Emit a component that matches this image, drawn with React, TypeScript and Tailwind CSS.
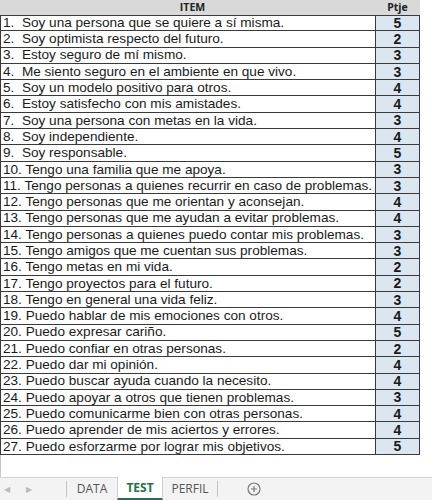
import { Fragment } from "react";

const items: [string, number][] = [
  ["1.  Soy una persona que se quiere a sí misma.", 5],
  ["2.  Soy optimista respecto del futuro.", 2],
  ["3.  Estoy seguro de mí mismo.", 3],
  ["4.  Me siento seguro en el ambiente en que vivo.", 3],
  ["5.  Soy un modelo positivo para otros.", 4],
  ["6.  Estoy satisfecho con mis amistades.", 4],
  ["7.  Soy una persona con metas en la vida.", 3],
  ["8.  Soy independiente.", 4],
  ["9.  Soy responsable.", 5],
  ["10. Tengo una familia que me apoya.", 3],
  ["11. Tengo personas a quienes recurrir en caso de problemas.", 3],
  ["12. Tengo personas que me orientan y aconsejan.", 4],
  ["13. Tengo personas que me ayudan a evitar problemas.", 4],
  ["14. Tengo personas a quienes puedo contar mis problemas.", 3],
  ["15. Tengo amigos que me cuentan sus problemas.", 3],
  ["16. Tengo metas en mi vida.", 2],
  ["17. Tengo proyectos para el futuro.", 2],
  ["18. Tengo en general una vida feliz.", 3],
  ["19. Puedo hablar de mis emociones con otros.", 4],
  ["20. Puedo expresar cariño.", 5],
  ["21. Puedo confiar en otras personas.", 2],
  ["22. Puedo dar mi opinión.", 4],
  ["23. Puedo buscar ayuda cuando la necesito.", 4],
  ["24. Puedo apoyar a otros que tienen problemas.", 3],
  ["25. Puedo comunicarme bien con otras personas.", 4],
  ["26. Puedo aprender de mis aciertos y errores.", 4],
  ["27. Puedo esforzarme por lograr mis objetivos.", 5],
];

export default function App() {
  return (
    <div className="w-[432px] h-[500px] bg-white flex flex-col overflow-hidden font-['Liberation_Sans',Arial,sans-serif] text-[#1a1a1a]">
      <div className="grid grid-cols-[375px_45px] w-[420px]">
        <div className="h-[15px] bg-[#d9d9d9] flex items-center justify-center text-[10.5px] font-bold font-['Open_Sans',sans-serif] text-[#222] pl-[10px]">
          ITEM
        </div>
        <div className="h-[15px] bg-[#d9d9d9] flex items-center justify-center text-[10.5px] font-bold font-['Open_Sans',sans-serif] text-[#222]">
          Ptje
        </div>
        {items.map(([text, score], i) => (
          <Fragment key={i}>
            <div
              className={`h-[16.3px] border-l border-b border-[#3a3a3a] pl-[2px] flex items-center text-[13.6px] leading-none whitespace-pre overflow-hidden ${i === 0 ? "border-t" : ""}`}
            >
              {text}
            </div>
            <div
              className={`h-[16.3px] border-x border-b border-[#3a3a3a] bg-[#dce6f1] flex items-center justify-center text-[14px] font-bold leading-none ${i === 0 ? "border-t" : ""}`}
            >
              {score}
            </div>
          </Fragment>
        ))}
      </div>
      <div className="flex-1 border-l border-[#c8c8c8]" />
      <div className="h-[23px] bg-[#f3f3f3] border-t border-[#d4d4d4] flex items-stretch text-[12px] font-['Open_Sans',sans-serif] text-[#555]">
        <div className="w-[66px] flex items-center text-[8px] text-[#bbb]">
          <span className="ml-[4px]">◀</span>
          <span className="ml-[16px]">▶</span>
        </div>
        <div className="w-px bg-[#c4c4c4] my-[3px]" />
        <div className="w-[50px] flex items-center justify-center">DATA</div>
        <div className="w-[46px] bg-white border-x border-[#d0d0d0] border-b-2 border-b-[#217346] -mt-px flex items-center justify-center font-bold text-[#217346]">
          TEST
        </div>
        <div className="w-[54px] flex items-center justify-center">PERFIL</div>
        <div className="w-px bg-[#c4c4c4] my-[3px]" />
        <div className="w-[72px] flex items-center justify-center">
          <svg width="14" height="14" viewBox="0 0 14 14" fill="none" stroke="#777" strokeWidth="1.2">
            <circle cx="7" cy="7" r="6" />
            <path d="M7 4v6M4 7h6" />
          </svg>
        </div>
      </div>
    </div>
  );
}
